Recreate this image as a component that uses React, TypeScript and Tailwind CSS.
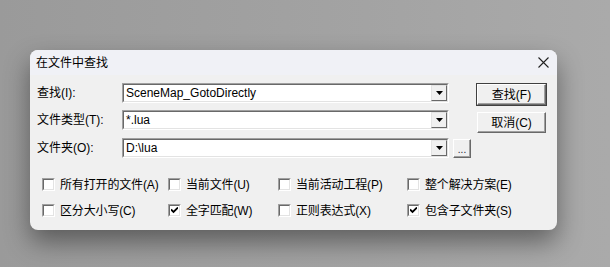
const font = { fontFamily: '"Liberation Sans", "Noto Sans CJK SC", sans-serif' };

function Combo({ value }: { value: string }) {
  return (
    <div className="flex h-[20px] w-[327px] border border-t-[#a0a0a0] border-l-[#a0a0a0] border-b-white border-r-white">
      <div className="flex flex-1 items-center border border-t-[#696969] border-l-[#696969] border-b-[#e3e3e3] border-r-[#e3e3e3] bg-white">
        <span className="flex-1 pl-[2px] text-[12px] leading-none text-black">{value}</span>
        <div className="flex h-full w-[16px] items-center justify-center border border-t-[#e3e3e3] border-l-[#e3e3e3] border-b-[#696969] border-r-[#696969] bg-[#f0f0f0]">
          <svg width="7" height="4" viewBox="0 0 7 4">
            <path d="M0 0h7L3.5 4z" fill="#000" />
          </svg>
        </div>
      </div>
    </div>
  );
}

function Check({ checked, label }: { checked?: boolean; label: string }) {
  return (
    <div className="flex items-center">
      <div className="flex h-[13px] w-[13px] items-center justify-center border border-t-[#a0a0a0] border-l-[#a0a0a0] border-b-white border-r-white">
        <div className="flex h-full w-full items-center justify-center border border-t-[#696969] border-l-[#696969] border-b-[#e3e3e3] border-r-[#e3e3e3] bg-white">
          {checked && (
            <svg width="7" height="7" viewBox="0 0 7 7">
              <path d="M0 2.5l2.5 2.5L7 0.5" stroke="#000" strokeWidth="1.8" fill="none" />
            </svg>
          )}
        </div>
      </div>
      <span className="ml-[5px] text-[12px] leading-none tracking-[-0.15px] text-black">{label}</span>
    </div>
  );
}

function Button({ label, primary }: { label: string; primary?: boolean }) {
  return (
    <div
      className={
        "flex h-[23px] w-[71px] " +
        (primary ? "border border-[#404040]" : "border border-transparent")
      }
    >
      <div className="flex flex-1 items-center justify-center border border-t-white border-l-white border-b-[#696969] border-r-[#696969] bg-[#f0f0f0] shadow-[inset_-1px_-1px_0_#a0a0a0]">
        <span className="text-[12px] leading-none text-black">{label}</span>
      </div>
    </div>
  );
}

export default function App() {
  return (
    <div
      className="h-[267px] w-[610px] overflow-hidden bg-[linear-gradient(90deg,#9a9a9a,#a3a3a3_60%,#aaaaaa)] pl-[30px] pt-[50px]"
      style={font}
    >
      <div className="h-[180px] w-[527px] overflow-hidden rounded-[8px] bg-[#f0f0f0] shadow-[0_12px_26px_rgba(0,0,0,0.42)]">
        <div className="flex h-[25px] items-center justify-between bg-[#f0f1f6] pl-[6px] pr-[8px]">
          <span className="text-[12px] text-black">在文件中查找</span>
          <svg width="11" height="11" viewBox="0 0 11 11">
            <path d="M0.5 0.5l10 10M10.5 0.5l-10 10" stroke="#222" strokeWidth="1.1" />
          </svg>
        </div>
        <div className="flex pl-[7px] pt-[8px]">
          <div className="flex w-[439px] flex-col gap-[7px]">
            <div className="flex items-center">
              <span className="w-[85px] text-[12px] text-black">查找(I):</span>
              <Combo value="SceneMap_GotoDirectly" />
            </div>
            <div className="flex items-center">
              <span className="w-[85px] text-[12px] text-black">文件类型(T):</span>
              <Combo value="*.lua" />
            </div>
            <div className="flex items-center">
              <span className="w-[85px] text-[12px] text-black">文件夹(O):</span>
              <Combo value="D:\lua" />
              <div className="ml-[4px] mt-[2px] flex h-[19px] w-[18px] border border-t-white border-l-white border-b-[#696969] border-r-[#696969] shadow-[inset_-1px_-1px_0_#a0a0a0]">
                <span className="flex flex-1 items-end justify-center pb-[2px] text-[10px] leading-none text-[#223]">...</span>
              </div>
            </div>
          </div>
          <div className="flex flex-col gap-[5px]">
            <Button label="查找(F)" primary />
            <Button label="取消(C)" />
          </div>
        </div>
        <div className="grid grid-cols-[126px_110px_129px_1fr] gap-y-[13px] pl-[12px] pt-[20px]">
          <Check label="所有打开的文件(A)" />
          <Check label="当前文件(U)" />
          <Check label="当前活动工程(P)" />
          <Check label="整个解决方案(E)" />
          <Check label="区分大小写(C)" />
          <Check label="全字匹配(W)" checked />
          <Check label="正则表达式(X)" />
          <Check label="包含子文件夹(S)" checked />
        </div>
      </div>
    </div>
  );
}
